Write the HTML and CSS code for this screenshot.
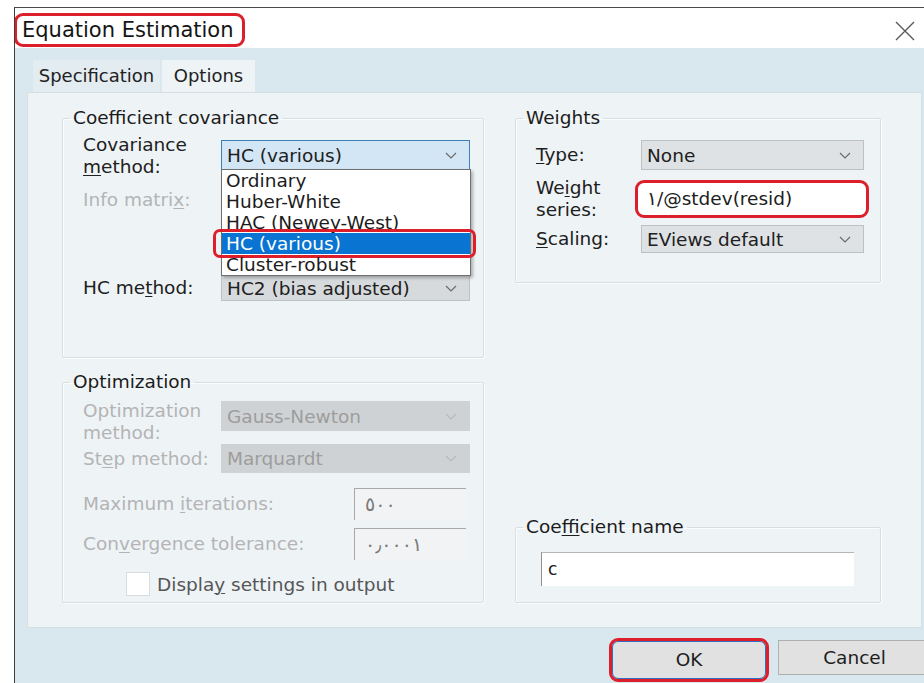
FILE: index.html
```html
<!DOCTYPE html>
<html>
<head>
<meta charset="utf-8">
<title>Equation Estimation</title>
<link rel="stylesheet" href="styles.css">
</head>
<body>
<div class="screen">
  <div class="window">
    <header class="titlebar">
      <h1 class="title mark">Equation Estimation</h1>
      <svg class="close" width="20" height="20" viewBox="0 0 20 20"><path d="M1 1 L19 19 M19 1 L1 19" stroke="#5a5a5a" stroke-width="1.4" fill="none"/></svg>
    </header>
    <div class="client">
      <div class="tabs">
        <span class="tab">Specification</span>
        <span class="tab active">Options</span>
      </div>
      <div class="panel">
        <div class="col col-left">
          <fieldset class="group cov">
            <legend>Coefficient covariance</legend>
            <div class="row row-cov">
              <span class="lbl">Covariance<br><u>m</u>ethod:</span>
              <div class="combo focus">
                <span>HC (various)</span>
                <svg class="chev" width="12" height="7" viewBox="0 0 12 7"><polyline points="1,1 6,6 11,1" fill="none" stroke="#6a6a6a" stroke-width="1.2"/></svg>
                <ul class="list">
                  <li>Ordinary</li>
                  <li>Huber-White</li>
                  <li>HAC (Newey-West)</li>
                  <li class="sel">HC (various)<span class="ring"></span></li>
                  <li>Cluster-robust</li>
                </ul>
              </div>
            </div>
            <div class="row row-info">
              <span class="lbl off">Info matri<u>x</u>:</span>
            </div>
            <div class="row row-hc">
              <span class="lbl">HC me<u>t</u>hod:</span>
              <div class="combo plain">
                <span>HC2 (bias adjusted)</span>
                <svg class="chev" width="12" height="7" viewBox="0 0 12 7"><polyline points="1,1 6,6 11,1" fill="none" stroke="#6a6a6a" stroke-width="1.2"/></svg>
              </div>
            </div>
          </fieldset>

          <fieldset class="group opt">
            <legend>Optimization</legend>
            <div class="row row-optm">
              <span class="lbl off">Optimization<br>method:</span>
              <div class="combo disabled">
                <span>Gauss-Newton</span>
                <svg class="chev" width="12" height="7" viewBox="0 0 12 7"><polyline points="1,1 6,6 11,1" fill="none" stroke="#b8b8b8" stroke-width="1.2"/></svg>
              </div>
            </div>
            <div class="row row-step">
              <span class="lbl off">St<u>e</u>p method:</span>
              <div class="combo disabled short">
                <span>Marquardt</span>
                <svg class="chev" width="12" height="7" viewBox="0 0 12 7"><polyline points="1,1 6,6 11,1" fill="none" stroke="#b8b8b8" stroke-width="1.2"/></svg>
              </div>
            </div>
            <div class="row row-num">
              <span class="lbl wide off">Maximum <u>i</u>terations:</span>
              <span class="numbox">٥٠٠</span>
            </div>
            <div class="row row-num second">
              <span class="lbl wide off">Con<u>v</u>ergence tolerance:</span>
              <span class="numbox">٠٫٠٠٠١</span>
            </div>
            <div class="row row-check">
              <span class="box"></span>
              <span class="check-text">Displa<u>y</u> settings in output</span>
            </div>
          </fieldset>
        </div>

        <div class="col col-right">
          <fieldset class="group weights">
            <legend>Weights</legend>
            <div class="row row-type">
              <span class="lbl narrow"><u>T</u>ype:</span>
              <div class="combo grey">
                <span>None</span>
                <svg class="chev" width="12" height="7" viewBox="0 0 12 7"><polyline points="1,1 6,6 11,1" fill="none" stroke="#6a6a6a" stroke-width="1.2"/></svg>
              </div>
            </div>
            <div class="row row-series">
              <span class="lbl narrow">We<u>i</u>ght<br>series:</span>
              <span class="series mark">١/@stdev(resid)</span>
            </div>
            <div class="row row-scale">
              <span class="lbl narrow"><u>S</u>caling:</span>
              <div class="combo grey short">
                <span>EViews default</span>
                <svg class="chev" width="12" height="7" viewBox="0 0 12 7"><polyline points="1,1 6,6 11,1" fill="none" stroke="#6a6a6a" stroke-width="1.2"/></svg>
              </div>
            </div>
          </fieldset>

          <fieldset class="group coefname">
            <legend>Coe<u>f</u>ficient name</legend>
            <div class="row row-name">
              <span class="textbox">c</span>
            </div>
          </fieldset>
        </div>
      </div>
      <div class="footer">
        <span class="btn ok mark">OK</span>
        <span class="btn cancel">Cancel</span>
      </div>
    </div>
  </div>
</div>
</body>
</html>
```

FILE: styles.css
```css
* { box-sizing: border-box; }

html, body {
  margin: 0;
  width: 924px;
  height: 683px;
  overflow: hidden;
  background: #ffffff;
}

body {
  font-family: "DejaVu Sans", "Verdana", sans-serif;
  font-size: 18.5px;
  color: #202020;
}

u { text-decoration-thickness: 1px; text-underline-offset: 2px; }

.screen {
  padding: 7px 0 0 14px;
  height: 683px;
}

.window {
  height: 676px;
  border-top: 1px solid #4a4a4a;
  border-left: 1px solid #3c3c3c;
  display: flex;
  flex-direction: column;
  overflow: hidden;
}

/* title bar */
.titlebar {
  height: 40px;
  flex: none;
  background: #ffffff;
  display: flex;
  justify-content: space-between;
  align-items: flex-start;
}

.title {
  margin: 5px 0 0 -1px;
  height: 34px;
  padding: 0 8px 0 5px;
  font-size: 21px;
  font-weight: normal;
  line-height: 28px;
  color: #151515;
}

.mark {
  border: 3px solid #dc1f2b;
  border-radius: 9px;
}

.close {
  margin: 13px 9px 0 0;
}

/* dialog client area */
.client {
  flex: 1;
  background: #d9e8ee;
  padding: 12px 2px 0 12px;
  display: flex;
  flex-direction: column;
  overflow: hidden;
}

.tabs {
  display: flex;
  height: 32px;
  padding-left: 6px;
  flex: none;
}

.tab {
  width: 127px;
  line-height: 32px;
  text-align: center;
  font-size: 18px;
  background: #e3ecf0;
  color: #222;
}

.tab.active {
  width: 93px;
  margin-left: 2px;
  background: #eef3f6;
}

.panel {
  height: 536px;
  flex: none;
  background: #eef3f6;
  border: 1px solid #d6e0e4;
  padding: 14px 0 0 34px;
  display: flex;
  align-items: flex-start;
  gap: 31px;
}

.col {
  display: flex;
  flex-direction: column;
}

.col-left {
  width: 422px;
  gap: 13px;
}

.col-right {
  width: 366px;
  height: 496px;
  justify-content: space-between;
}

/* group boxes */
.group {
  margin: 0;
  min-width: 0;
  padding: 0;
  border: 1px solid #d8dee1;
  border-radius: 2px;
  box-shadow: inset 1px 1px 0 #fbfdfd, 1px 1px 0 #fbfdfd;
}

.group legend {
  margin-left: 7px;
  padding: 0 3px;
  line-height: 22px;
  color: #1c1c1c;
}

.row {
  display: flex;
  align-items: center;
  padding-left: 20px;
}

.lbl {
  width: 138px;
  flex: none;
  line-height: 22px;
}

.lbl.narrow { width: 105px; }
.lbl.wide { width: 271px; }

.off { color: #b4b4b4; }

/* combo boxes */
.combo {
  position: relative;
  width: 249px;
  height: 30px;
  display: flex;
  align-items: center;
  justify-content: space-between;
  padding: 0 12px 0 5px;
  border: 1px solid #b7b7b7;
  white-space: nowrap;
}

.combo.focus {
  background: #d3e6f5;
  border-color: #3f7fb8;
}

.combo.plain {
  height: 26px;
  background: #d7dadc;
  border-color: #bfc2c4;
}

.combo.grey {
  width: 223px;
  background: #dfe2e4;
  border-color: #bdbfc1;
}

.combo.grey.short { height: 28px; }

.combo.disabled {
  background: #cfd2d4;
  border-color: #cfd2d4;
  color: #9d9d9d;
}

.combo.disabled.short { height: 29px; }

/* open drop-down list */
.list {
  position: absolute;
  top: 100%;
  left: -1px;
  width: 250px;
  margin: 0;
  padding: 0;
  list-style: none;
  background: #ffffff;
  border: 1px solid #707070;
  box-shadow: 2px 2px 3px rgba(0, 0, 0, 0.28);
  z-index: 2;
}

.list li {
  position: relative;
  height: 21px;
  line-height: 21px;
  padding-left: 4px;
  color: #1c1c1c;
}

.list li.sel {
  background: #0a74d2;
  color: #ffffff;
}

.ring {
  position: absolute;
  left: -9px;
  right: -6px;
  top: -4px;
  bottom: -4px;
  border: 3px solid #dc1f2b;
  border-radius: 7px;
}

/* coefficient covariance rows */
.row-cov {
  height: 44px;
  margin-top: 5px;
  align-items: flex-start;
}

.row-cov .combo { margin-top: 6px; }

.row-info {
  height: 22px;
  margin-top: 11px;
}

.row-hc {
  height: 26px;
  margin-top: 64px;
  margin-bottom: 56px;
}

/* optimization rows */
.row-optm {
  height: 44px;
  margin-top: 7px;
  align-items: flex-start;
}

.row-optm .combo { margin-top: 1px; }

.row-step { height: 29px; }

.row-num {
  height: 32px;
  margin-top: 15px;
}

.row-num.second { margin-top: 8px; }

.numbox {
  width: 112px;
  height: 32px;
  padding-left: 10px;
  line-height: 31px;
  background: #f1f3f4;
  border-top: 1px solid #a9a9a9;
  border-left: 1px solid #a9a9a9;
  color: #7a7a7a;
  font-size: 19px;
}

.row-check {
  height: 24px;
  margin: 12px 0 6px;
  padding-left: 63px;
}

.box {
  width: 24px;
  height: 24px;
  background: #ffffff;
  border: 1px solid #d8dcde;
}

.check-text {
  margin-left: 7px;
  color: #565656;
}

/* weights rows */
.row-type {
  height: 30px;
  margin-top: 11px;
}

.row-series {
  height: 44px;
  margin-top: 7px;
}

.series {
  width: 234px;
  height: 38px;
  margin-left: -6px;
  padding-left: 9px;
  line-height: 32px;
  background: #ffffff;
}

.row-scale {
  height: 28px;
  margin-top: 4px;
  margin-bottom: 29px;
}

/* coefficient name */
.row-name {
  padding-left: 25px;
  margin: 14px 0 16px;
}

.textbox {
  width: 313px;
  height: 34px;
  padding-left: 6px;
  line-height: 33px;
  background: #ffffff;
  border-top: 1px solid #b5b5b5;
  border-left: 1px solid #8f8f8f;
  font-size: 17px;
}

/* buttons */
.footer {
  display: flex;
  align-items: flex-start;
  gap: 9px;
  padding: 10px 0 0 582px;
  flex: none;
}

.btn {
  flex: none;
  width: 160px;
  height: 44px;
  text-align: center;
  line-height: 38px;
  background: #e1e1e1;
  color: #1e1e1e;
}

.btn.ok {
  box-shadow: inset 0 0 0 1px #2f6fbf;
}

.btn.cancel {
  width: 153px;
  height: 35px;
  margin-top: 2px;
  line-height: 33px;
  border: 1px solid #b0b0b0;
}
```
